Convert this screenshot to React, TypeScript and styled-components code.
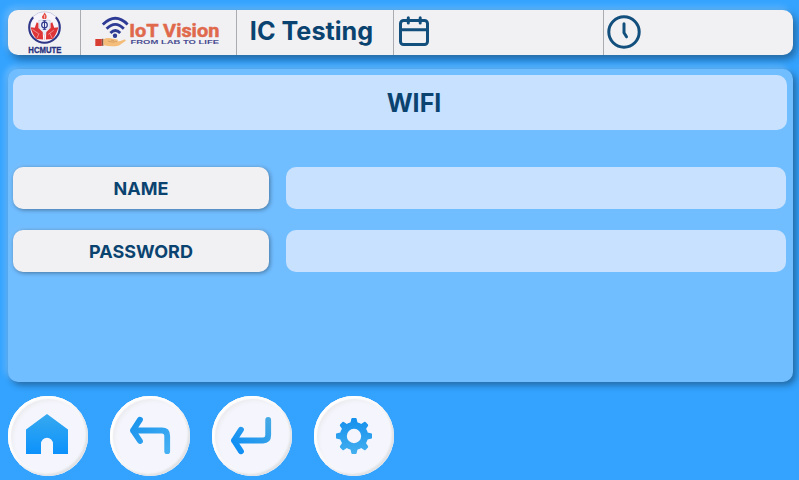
import React from "react";
import styled, { createGlobalStyle } from "styled-components";

const GlobalStyle = createGlobalStyle`
  * { box-sizing: border-box; }
  body {
    margin: 0;
    background: #33a3ff;
    font-family: Inter, "Liberation Sans", sans-serif;
    overflow: hidden;
  }
`;

const navy = "#0b4370";

const Screen = styled.main`
  display: flex;
  flex-direction: column;
  width: 799px;
  height: 480px;
  padding: 10px 6px 4px 8px;
  background: #33a3ff;
  color: ${navy};
`;

const Header = styled.header`
  display: grid;
  grid-template-columns: 73px 156px 157px 210px 1fr;
  flex: none;
  height: 45px;
  border-radius: 10px;
  background: #f1f1f3;
  box-shadow: 3px 4px 8px rgba(0, 0, 0, 0.4), -3px -3px 7px rgba(255, 255, 255, 0.25);
`;

const HeaderCell = styled.div<{ $center?: boolean }>`
  display: flex;
  align-items: center;
  justify-content: ${(p) => (p.$center ? "center" : "flex-start")};
  border-right: 1px solid #a9acb1;
  &:last-child { border-right: 0; }
  svg { display: block; flex: none; }
`;

const AppName = styled.h1`
  margin: 0 0 4px;
  padding-right: 7px;
  font-size: 25.2px;
  line-height: 32px;
  font-weight: 700;
  white-space: nowrap;
`;

const Panel = styled.section`
  display: flex;
  flex-direction: column;
  flex: none;
  height: 313px;
  margin-top: 14px;
  padding: 6px 6px 0 5px;
  border-radius: 10px;
  background: #70bdff;
  box-shadow: 3px 3px 7px rgba(0, 0, 0, 0.38), -3px -3px 6px rgba(255, 255, 255, 0.25);
`;

const PanelTitle = styled.h2`
  display: flex;
  align-items: center;
  justify-content: center;
  height: 55px;
  margin: 0 0 37px;
  padding: 1px 0 0 28px;
  border-radius: 10px;
  background: #c7e1ff;
  font-size: 25px;
  font-weight: 700;
`;

const Form = styled.div`
  display: flex;
  flex-direction: column;
  gap: 21px;
  padding-right: 1px;
`;

const FieldRow = styled.label`
  display: grid;
  grid-template-columns: 256px 500px;
  column-gap: 17px;
  height: 42px;
`;

const FieldLabel = styled.span`
  display: flex;
  align-items: center;
  justify-content: center;
  border-radius: 10px;
  background: #f1f1f3;
  box-shadow: 1px 1px 4px rgba(0, 0, 0, 0.38), -2px -2px 5px rgba(255, 255, 255, 0.08);
  font-size: 18px;
  font-weight: 700;
`;

const FieldInput = styled.input`
  width: 100%;
  height: 42px;
  padding: 0 14px;
  border: 0;
  border-radius: 10px;
  outline: 0;
  background: #c7e1ff;
  color: ${navy};
  font: 600 18px Inter, sans-serif;
`;

const Nav = styled.nav`
  display: flex;
  gap: 22px;
  margin-top: 14px;
`;

const RoundButton = styled.button`
  width: 80px;
  height: 80px;
  padding: 0;
  border: 0;
  border-radius: 50%;
  background: #f5f6fd;
  box-shadow: inset 2px 2px 2px #ffffff, inset -2px -2px 2px #dfe1e5,
    inset 0 0 0 3px #f8f8fa, inset 4px 4px 4px #e9e9ed;
  svg { display: block; }
`;

const UniversityLogo = () => (
  <svg width="44" height="45" viewBox="0 0 44 45">
    <circle cx="22.5" cy="17.5" r="15.8" fill="#f7f5fb" stroke="#b9bedb" strokeWidth=".7" />
    <path d="M11.2 7.2A15.2 15.2 0 0 0 11.5 28Q16.5 32.8 22.5 32.8T33.5 28A15.2 15.2 0 0 0 33.8 7.2" fill="none" stroke="#303787" strokeWidth="2.1" />
    <path d="M22.5 2.5Q25.8 5.8 24 9H21Q18.8 7 21.2 4.9Z" fill="#e74d47" />
    <path d="M22.6 5v3.5" stroke="#f4d6d8" strokeWidth=".8" />
    <path d="M16.7 10.5Q19.8 9.3 22.5 11Q25.2 9.3 28.3 10.5L27.4 20L22.5 25L17.6 20Z" fill="#e9edf8" stroke="#b5bcd8" strokeWidth=".5" />
    <circle cx="22.5" cy="15" r="2.8" fill="none" stroke="#30398d" strokeWidth="1.2" />
    <path d="M22.5 10.6v8.8M20.8 10.8h3.4M20.8 19.3h3.4" stroke="#30398d" strokeWidth="1" />
    <path d="M8.6 17.2L12.8 17.7L14.7 12.2L16.4 13.2L16.4 18L20.7 22L21.1 29.4L14.7 29Q10.8 25.5 8.6 17.2Z" fill="#df3437" />
    <path d="M36.4 17.2L32.2 17.7L30.3 12.2L28.6 13.2L28.6 18L24.3 22L23.9 29.4L30.3 29Q34.2 25.5 36.4 17.2Z" fill="#df3437" />
    <path d="M10.5 19.5l6 4.2M31.8 20.2l-5.5 4.2M15 28l2-4.5M30 28l-2-4.5M22.5 25v5" stroke="#f2b6b6" strokeWidth=".7" />
    <text x="6.3" y="43.1" textLength="33.2" lengthAdjust="spacingAndGlyphs" fontFamily="Liberation Sans, sans-serif" fontWeight="700" fontSize="8.6" fill="#29327f" stroke="#29327f" strokeWidth=".3">HCMUTE</text>
  </svg>
);

const IotLogo = () => (
  <svg width="155" height="45" viewBox="0 0 155 45">
    <g fill="none" stroke="#2d3b94" strokeWidth="2.8">
      <path d="M21.8 14.5Q34.5 2 46.6 14.5" />
      <path d="M25.6 18.8Q34.4 9.8 42.8 18.8" />
      <path d="M29.4 23Q34.4 18 39.2 23" />
    </g>
    <circle cx="34" cy="25.8" r="2.2" fill="#2d3b94" />
    <path d="M14.3 29h6.5v7h-6.5z" fill="#d83d31" />
    <path d="M20.8 28.8h1.7v7h-1.7z" fill="#85513e" />
    <path d="M22.5 29.2Q27 26.8 31.8 28.8L36.2 29.5Q38 30.7 35.5 31.4L39.5 31L43.2 29.5Q45.5 29.2 44.5 31L38 35.4Q31 37.2 22.5 35.2Z" fill="#f4bd79" />
    <path d="M27 31.2Q32 33 36.3 31.3M30 30l3 .7" fill="none" stroke="#cc935b" strokeWidth=".7" />
    <text x="48.3" y="26.7" textLength="90" lengthAdjust="spacingAndGlyphs" fontFamily="Roboto, sans-serif" fontWeight="700" fontSize="19" fill="#e0694c" stroke="#e0694c" strokeWidth=".5">IoT Vision</text>
    <text x="49.5" y="33.6" textLength="88.5" lengthAdjust="spacingAndGlyphs" fontFamily="Liberation Sans, sans-serif" fontWeight="700" fontSize="5" fill="#4a4d91">FROM LAB TO LIFE</text>
  </svg>
);

const CalendarIcon = () => (
  <svg width="42" height="45" viewBox="0 0 42 45" fill="none" stroke="#124f7d" strokeWidth="3" strokeLinecap="round">
    <rect x="6.5" y="10.5" width="27" height="24" rx="3" />
    <path d="M6.5 19.8h27M14.3 7.7v5.3M26.2 7.7v5.3" />
  </svg>
);

const ClockIcon = () => (
  <svg width="42" height="45" viewBox="0 0 42 45" fill="none" stroke="#124f7d" strokeWidth="3" strokeLinecap="round" strokeLinejoin="round">
    <circle cx="20" cy="22" r="15.2" />
    <path d="M20 13.8v9l2.5 4" />
  </svg>
);

const HomeIcon = () => (
  <svg width="80" height="80" viewBox="0 0 80 80">
    <defs>
      <linearGradient id="home" gradientUnits="userSpaceOnUse" x1="40" y1="18" x2="40" y2="58">
        <stop stopColor="#37a9ef" />
        <stop offset="1" stopColor="#0c92fc" />
      </linearGradient>
    </defs>
    <path d="M39 18L60 33.5V58H45V48A6 6.3 0 0 0 33 48V58H18V33.5Z" fill="url(#home)" />
  </svg>
);

const BackIcon = () => (
  <svg width="80" height="80" viewBox="0 0 80 80" fill="none" stroke="url(#back)" strokeWidth="5.8" strokeLinecap="round" strokeLinejoin="round">
    <defs>
      <linearGradient id="back" gradientUnits="userSpaceOnUse" x1="20" y1="20" x2="60" y2="58">
        <stop stopColor="#1490eb" />
        <stop offset="1" stopColor="#47b1f4" />
      </linearGradient>
    </defs>
    <path d="M23 34.5H52Q57.2 34.5 57.2 40V55.2M30 23.7L22.9 34.5L30 45" />
  </svg>
);

const EnterIcon = () => (
  <svg width="80" height="80" viewBox="0 0 80 80" fill="none" stroke="url(#enter)" strokeWidth="5.8" strokeLinecap="round" strokeLinejoin="round">
    <defs>
      <linearGradient id="enter" gradientUnits="userSpaceOnUse" x1="24" y1="56" x2="58" y2="22">
        <stop stopColor="#0c8df5" />
        <stop offset="1" stopColor="#47aae4" />
      </linearGradient>
    </defs>
    <path d="M22 44.5H51Q56.2 44.5 56.2 39V23.8M29 33.7L21.9 44.5L29 55.3" />
  </svg>
);

const toothAngles = [0, 45, 90, 135, 180, 225, 270, 315];

const GearIcon = () => (
  <svg width="80" height="80" viewBox="0 0 80 80">
    <defs>
      <linearGradient id="gear" gradientUnits="userSpaceOnUse" x1="40" y1="22" x2="40" y2="58">
        <stop stopColor="#138fed" />
        <stop offset="1" stopColor="#43afef" />
      </linearGradient>
      <mask id="gearShape" maskUnits="userSpaceOnUse" x="0" y="0" width="80" height="80">
        <circle cx="40" cy="40" r="14" fill="#fff" />
        {toothAngles.map((angle) => (
          <path key={angle} d="M36 29L37.3 23Q37.5 22 38.3 22H41.7Q42.5 22 42.7 23L44 29Z" fill="#fff" transform={`rotate(${angle} 40 40)`} />
        ))}
        <circle cx="40" cy="40" r="7.2" fill="#000" />
      </mask>
    </defs>
    <path d="M20 20h40v40H20z" fill="url(#gear)" mask="url(#gearShape)" />
  </svg>
);

const actions = [
  { label: "Home", Icon: HomeIcon },
  { label: "Back", Icon: BackIcon },
  { label: "Enter", Icon: EnterIcon },
  { label: "Settings", Icon: GearIcon },
];

export default function App() {
  return (
    <>
      <GlobalStyle />
      <Screen>
        <Header>
          <HeaderCell $center><UniversityLogo /></HeaderCell>
          <HeaderCell><IotLogo /></HeaderCell>
          <HeaderCell $center><AppName>IC Testing</AppName></HeaderCell>
          <HeaderCell><CalendarIcon /></HeaderCell>
          <HeaderCell><ClockIcon /></HeaderCell>
        </Header>
        <Panel>
          <PanelTitle>WIFI</PanelTitle>
          <Form>
            <FieldRow><FieldLabel>NAME</FieldLabel><FieldInput type="text" /></FieldRow>
            <FieldRow><FieldLabel>PASSWORD</FieldLabel><FieldInput type="password" /></FieldRow>
          </Form>
        </Panel>
        <Nav>
          {actions.map(({ label, Icon }) => (
            <RoundButton key={label} aria-label={label}><Icon /></RoundButton>
          ))}
        </Nav>
      </Screen>
    </>
  );
}
